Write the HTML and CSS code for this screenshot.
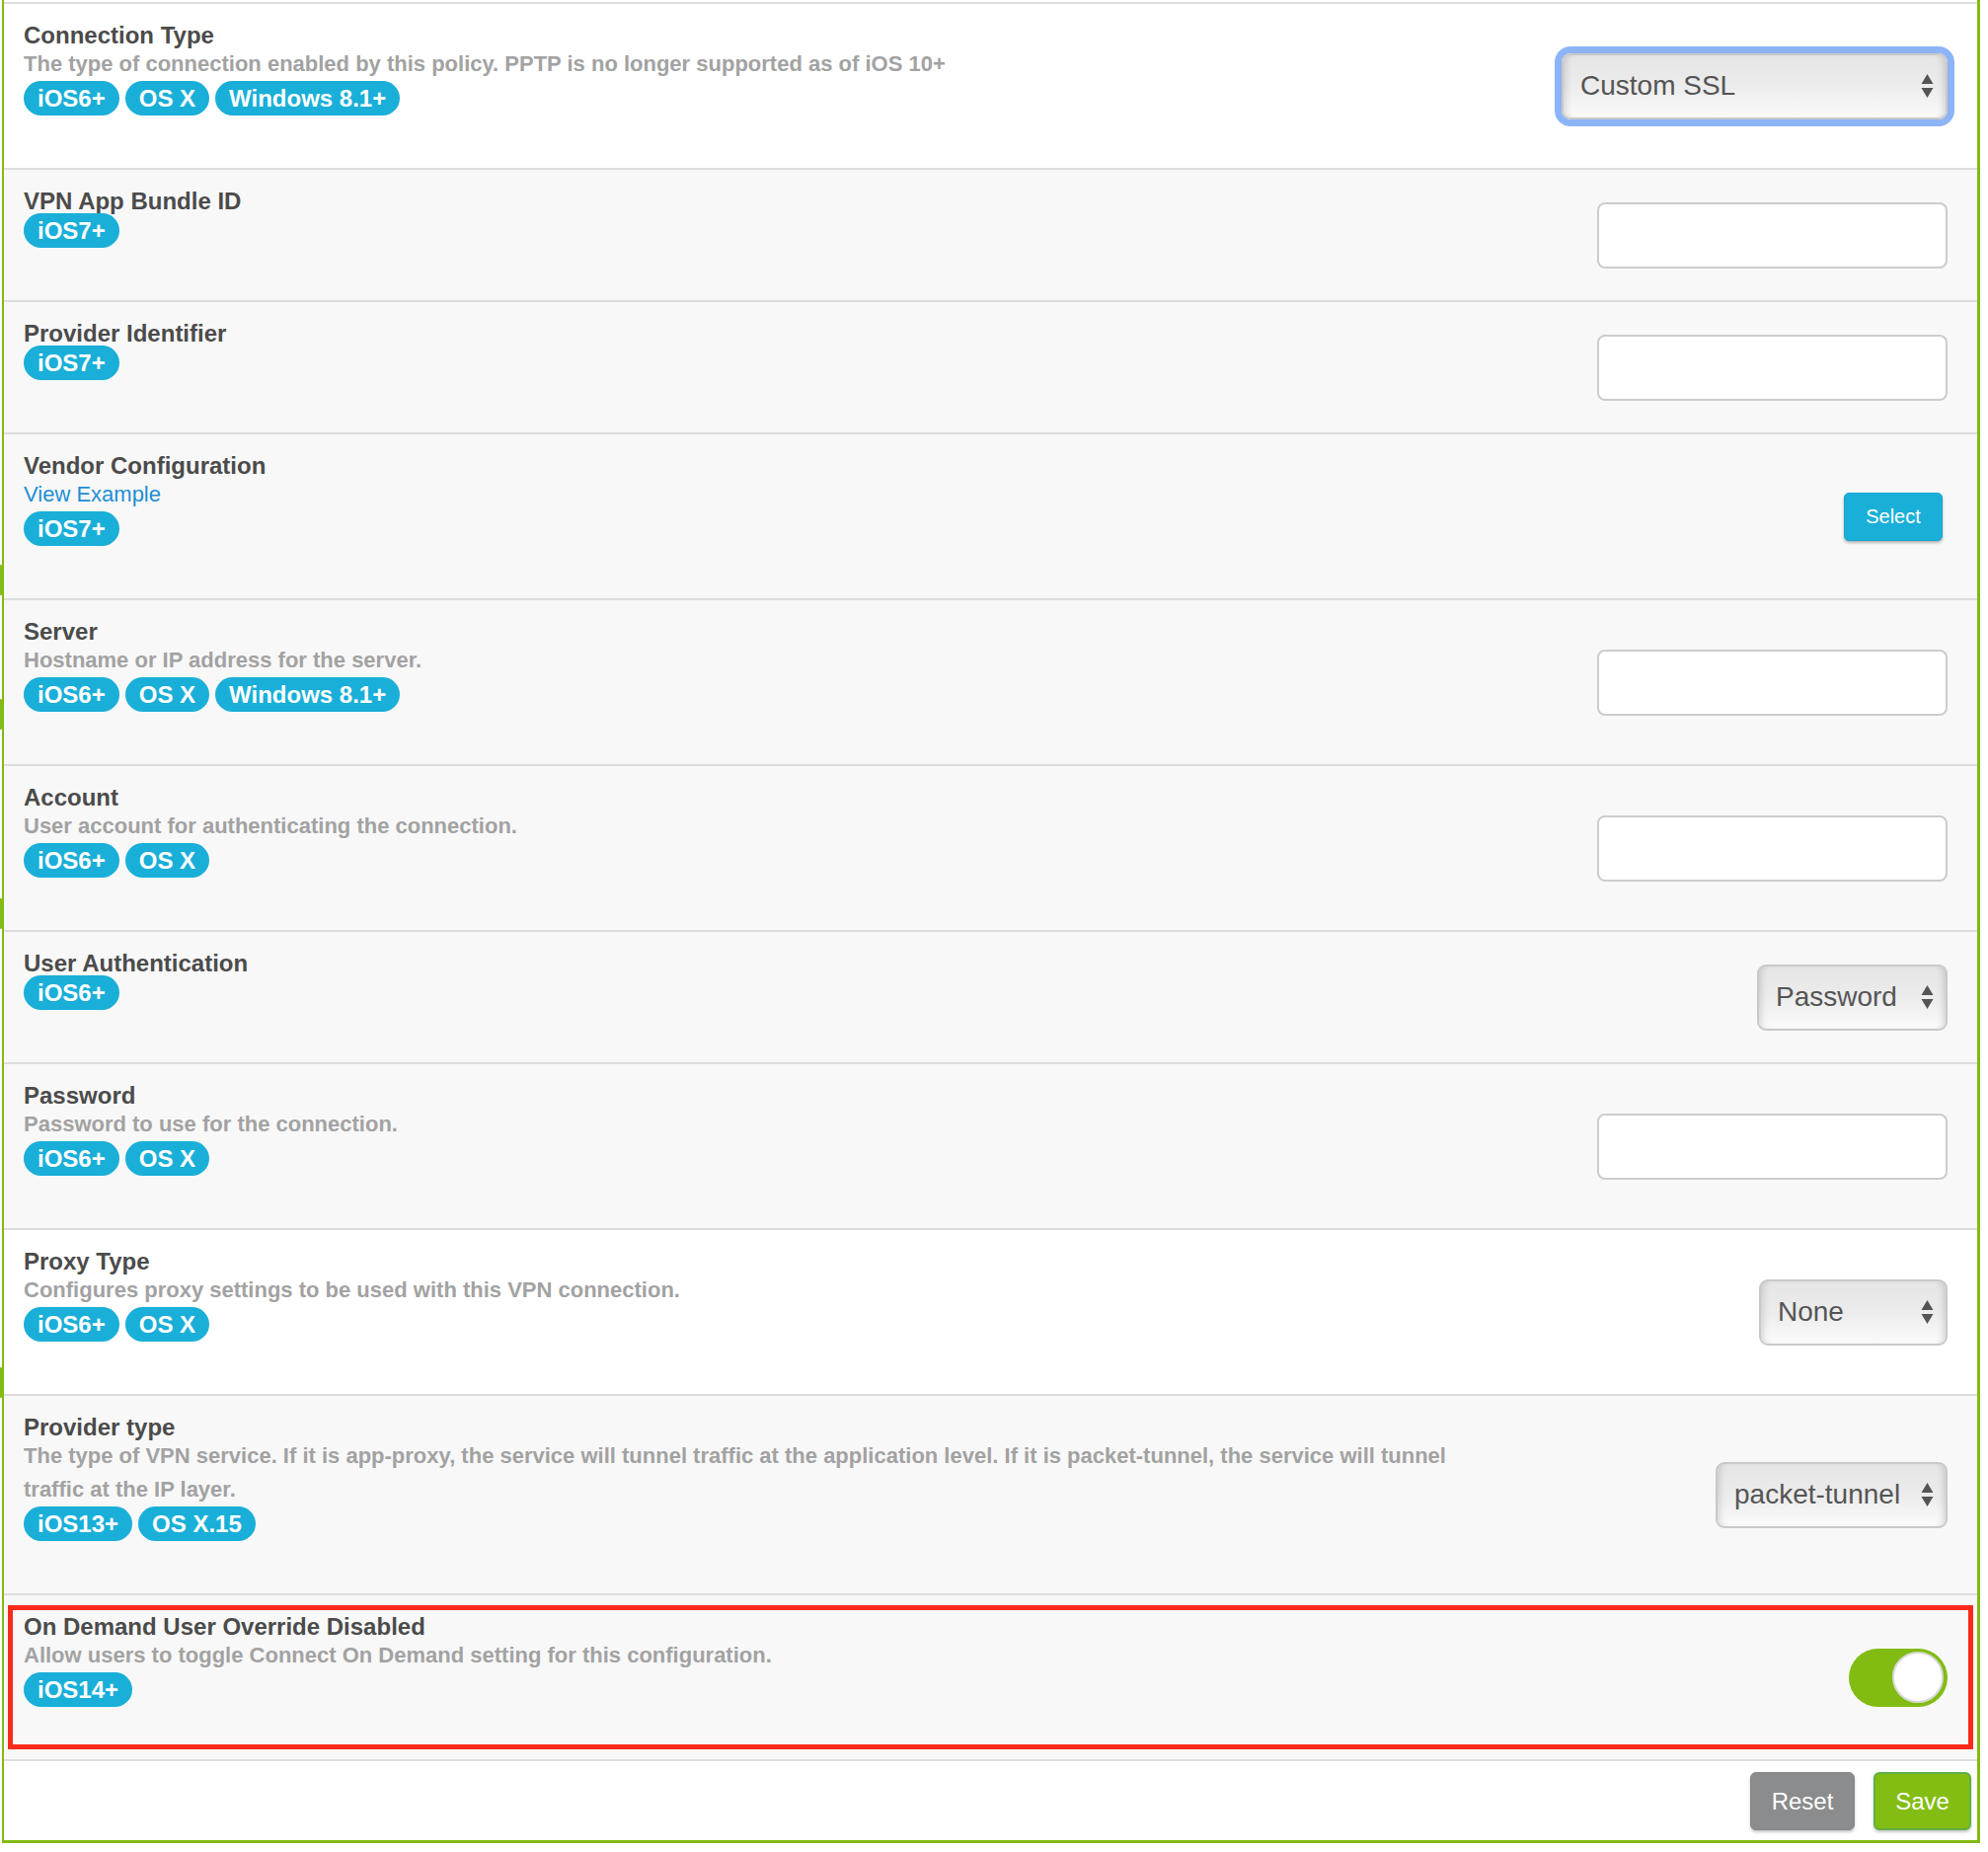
FILE: index.html
```html
<!DOCTYPE html>
<html>
<head>
<meta charset="utf-8">
<title>VPN Policy</title>
<link rel="stylesheet" href="styles.css">
</head>
<body>
<div class="page">
  <div class="tab tab-1"></div>
  <div class="tab tab-2"></div>
  <div class="tab tab-3"></div>
  <div class="tab tab-4"></div>
  <div class="panel">

    <div class="row row-white">
      <div class="info">
        <div class="title">Connection Type</div>
        <div class="desc">The type of connection enabled by this policy. PPTP is no longer supported as of iOS 10+</div>
        <div class="badges"><span class="badge">iOS6+</span><span class="badge">OS X</span><span class="badge">Windows 8.1+</span></div>
      </div>
      <div class="control">
        <div class="select select-conn focus"><span>Custom SSL</span><svg class="arrows" viewBox="0 0 12 24" width="13" height="24"><path d="M0 10 L6 0 L12 10 Z M0 14 L12 14 L6 24 Z" fill="#555"/></svg></div>
      </div>
    </div>

    <div class="row">
      <div class="info">
        <div class="title">VPN App Bundle ID</div>
        <div class="badges"><span class="badge">iOS7+</span></div>
      </div>
      <div class="control"><input class="field" type="text"></div>
    </div>

    <div class="row">
      <div class="info">
        <div class="title">Provider Identifier</div>
        <div class="badges"><span class="badge">iOS7+</span></div>
      </div>
      <div class="control"><input class="field" type="text"></div>
    </div>

    <div class="row">
      <div class="info">
        <div class="title">Vendor Configuration</div>
        <div class="link">View Example</div>
        <div class="badges"><span class="badge">iOS7+</span></div>
      </div>
      <div class="control"><button class="btn-select" type="button">Select</button></div>
    </div>

    <div class="row">
      <div class="info">
        <div class="title">Server</div>
        <div class="desc">Hostname or IP address for the server.</div>
        <div class="badges"><span class="badge">iOS6+</span><span class="badge">OS X</span><span class="badge">Windows 8.1+</span></div>
      </div>
      <div class="control"><input class="field" type="text"></div>
    </div>

    <div class="row">
      <div class="info">
        <div class="title">Account</div>
        <div class="desc">User account for authenticating the connection.</div>
        <div class="badges"><span class="badge">iOS6+</span><span class="badge">OS X</span></div>
      </div>
      <div class="control"><input class="field" type="text"></div>
    </div>

    <div class="row">
      <div class="info">
        <div class="title">User Authentication</div>
        <div class="badges"><span class="badge">iOS6+</span></div>
      </div>
      <div class="control">
        <div class="select select-auth"><span>Password</span><svg class="arrows" viewBox="0 0 12 24" width="13" height="24"><path d="M0 10 L6 0 L12 10 Z M0 14 L12 14 L6 24 Z" fill="#555"/></svg></div>
      </div>
    </div>

    <div class="row">
      <div class="info">
        <div class="title">Password</div>
        <div class="desc">Password to use for the connection.</div>
        <div class="badges"><span class="badge">iOS6+</span><span class="badge">OS X</span></div>
      </div>
      <div class="control"><input class="field" type="text"></div>
    </div>

    <div class="row row-white">
      <div class="info">
        <div class="title">Proxy Type</div>
        <div class="desc">Configures proxy settings to be used with this VPN connection.</div>
        <div class="badges"><span class="badge">iOS6+</span><span class="badge">OS X</span></div>
      </div>
      <div class="control">
        <div class="select select-proxy"><span>None</span><svg class="arrows" viewBox="0 0 12 24" width="13" height="24"><path d="M0 10 L6 0 L12 10 Z M0 14 L12 14 L6 24 Z" fill="#555"/></svg></div>
      </div>
    </div>

    <div class="row">
      <div class="info">
        <div class="title">Provider type</div>
        <div class="desc">The type of VPN service. If it is app-proxy, the service will tunnel traffic at the application level. If it is packet-tunnel, the service will tunnel traffic at the IP layer.</div>
        <div class="badges"><span class="badge">iOS13+</span><span class="badge">OS X.15</span></div>
      </div>
      <div class="control">
        <div class="select select-prov"><span>packet-tunnel</span><svg class="arrows" viewBox="0 0 12 24" width="13" height="24"><path d="M0 10 L6 0 L12 10 Z M0 14 L12 14 L6 24 Z" fill="#555"/></svg></div>
      </div>
    </div>

    <div class="row highlight">
      <div class="info">
        <div class="title">On Demand User Override Disabled</div>
        <div class="desc">Allow users to toggle Connect On Demand setting for this configuration.</div>
        <div class="badges"><span class="badge">iOS14+</span></div>
      </div>
      <div class="control">
        <div class="toggle"><div class="knob"></div></div>
      </div>
    </div>

    <div class="footer">
      <button class="btn btn-reset" type="button">Reset</button>
      <button class="btn btn-save" type="button">Save</button>
    </div>

  </div>
</div>
</body>
</html>
```

FILE: styles.css
```css
html, body {
  margin: 0;
  padding: 0;
  background: #ffffff;
}

body {
  font-family: "Liberation Sans", Arial, Helvetica, sans-serif;
}

.page {
  position: relative;
  width: 2014px;
  height: 1876px;
}

.panel {
  margin-left: 2px;
  width: 2004px;
  box-sizing: border-box;
  border-left: 2px solid #82bb12;
  border-right: 3px solid #82bb12;
  border-bottom: 3px solid #82bb12;
  padding-top: 2px;
}

.tab {
  position: absolute;
  left: 0;
  width: 7px;
  height: 31px;
  background: #82bb12;
  border-radius: 0 7px 7px 0;
}
.tab-1 { top: 572px; }
.tab-2 { top: 708px; }
.tab-3 { top: 910px; }
.tab-4 { top: 1385px; }

.row {
  position: relative;
  display: flex;
  border-top: 2px solid #dddddd;
  background: #f8f8f8;
  padding: 0 30px 0 20px;
}

.row-white {
  background: #ffffff;
}

.info {
  flex: 1;
  max-width: 1480px;
  padding: 20px 0 53px;
}

.control {
  margin-left: auto;
  align-self: center;
  display: flex;
}

.title {
  font-size: 24px;
  line-height: 24px;
  font-weight: bold;
  color: #4b4b4b;
}

.desc {
  font-size: 22px;
  line-height: 34px;
  font-weight: bold;
  color: #a2a2a2;
}

.link {
  font-size: 22px;
  line-height: 34px;
  color: #1d8ed4;
}

.badges {
  display: flex;
  gap: 6px;
}

.title + .badges {
  margin-top: 0;
}

.badge {
  height: 35px;
  line-height: 35px;
  padding: 0 14px;
  border-radius: 18px;
  background: #19afd8;
  color: #ffffff;
  font-size: 24px;
  font-weight: bold;
}

.select {
  height: 67px;
  box-sizing: border-box;
  border: 2px solid #c9c9c9;
  border-radius: 9px;
  background: linear-gradient(#e5e5e5, #ececec 50%, #fbfbfb);
  display: flex;
  align-items: center;
  justify-content: space-between;
  padding: 0 12px 0 17px;
  font-size: 28px;
  color: #555555;
  box-shadow: inset 7px 0 7px -5px rgba(0, 0, 0, 0.14), inset -7px 0 7px -5px rgba(0, 0, 0, 0.14);
}

.select-conn { width: 391px; }
.select-auth { width: 193px; }
.select-proxy { width: 191px; }
.select-prov { width: 235px; }

.select.focus {
  box-shadow: 0 0 0 7px #8cb4f7, inset 7px 0 7px -5px rgba(0, 0, 0, 0.14), inset -7px 0 7px -5px rgba(0, 0, 0, 0.14);
}

.arrows {
  display: block;
}

.field {
  width: 355px;
  height: 67px;
  box-sizing: border-box;
  border: 2px solid #cccccc;
  border-radius: 8px;
  background: #ffffff;
  margin: 0;
  outline: none;
}

.btn-select {
  width: 100px;
  height: 49px;
  margin-right: 5px;
  box-sizing: border-box;
  border: 1px solid #18a6cd;
  border-radius: 5px;
  background: #19afd8;
  color: #ffffff;
  font-family: "Liberation Sans", Arial, sans-serif;
  font-size: 20px;
  padding: 0;
  box-shadow: 0 2px 3px rgba(0, 0, 0, 0.28);
}

.toggle {
  width: 100px;
  height: 59px;
  border-radius: 30px;
  background: #82bc13;
  display: flex;
  align-items: center;
  justify-content: flex-end;
  padding-right: 4px;
  box-sizing: border-box;
}

.knob {
  width: 52px;
  height: 52px;
  box-sizing: border-box;
  border-radius: 50%;
  background: #ffffff;
  border: 2px solid #d9d9d9;
}

.highlight::after {
  content: "";
  position: absolute;
  left: 4px;
  right: 4px;
  top: 10px;
  bottom: 10px;
  border: 5px solid #fb2b1c;
  pointer-events: none;
}

.footer {
  display: flex;
  justify-content: flex-end;
  gap: 19px;
  border-top: 2px solid #dddddd;
  background: #ffffff;
  padding: 11px 6px 10px 0;
}

.btn {
  height: 59px;
  box-sizing: border-box;
  border-radius: 6px;
  color: #ffffff;
  font-family: "Liberation Sans", Arial, sans-serif;
  font-size: 24px;
  padding: 0;
  box-shadow: 0 2px 3px rgba(0, 0, 0, 0.22);
}

.btn-reset {
  width: 106px;
  background: #8a8c8d;
  border: 1px solid #85878a;
}

.btn-save {
  width: 99px;
  background: #83bd13;
  border: 2px solid #5db046;
}
```
